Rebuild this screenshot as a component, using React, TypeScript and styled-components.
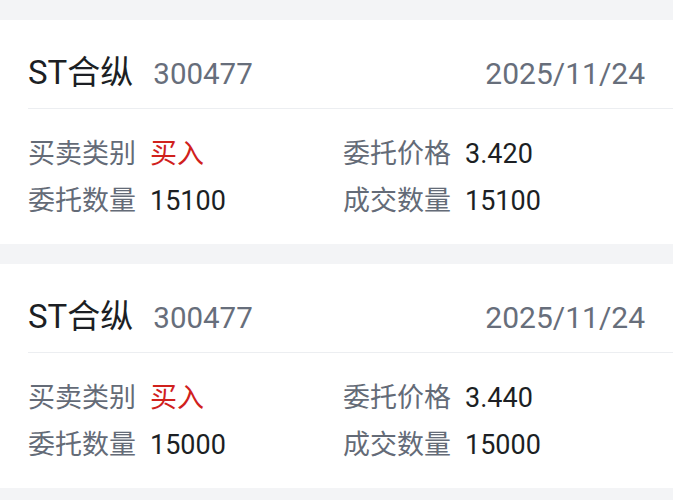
import React from "react";
import styled, { createGlobalStyle } from "styled-components";

const Global = createGlobalStyle`
  html, body { margin: 0; padding: 0; background: #f3f4f6; }
  body { font-family: Roboto, "Noto Sans CJK SC", sans-serif; }
`;

const Page = styled.div`
  background: #f3f4f6;
  padding-top: 20px;
  min-height: 500px;
  display: flex;
  flex-direction: column;
  gap: 20px;
`;

const Card = styled.div`
  background: #ffffff;
  padding-left: 28px;
`;

const Header = styled.div`
  display: flex;
  align-items: baseline;
  padding: 37px 28px 19px 0;
  height: 32px;
  line-height: 32px;
  border-bottom: 1px solid #eceef1;
`;

const Name = styled.span`
  font-size: 33px;
  color: #1c1f24;
`;

const Code = styled.span`
  font-size: 29.5px;
  color: #676e7b;
  margin-left: 20px;
`;

const DateText = styled.span`
  font-size: 30px;
  color: #676e7b;
  margin-left: auto;
`;

const Body = styled.div`
  display: grid;
  grid-template-columns: 315px 1fr;
  padding: 22px 0 19px;
`;

const Field = styled.div`
  display: flex;
  align-items: center;
  gap: 14px;
  line-height: 47px;
  font-size: 27px;
`;

const Label = styled.span`
  color: #646b77;
`;

const Value = styled.span<{ $red?: boolean }>`
  color: ${(p) => (p.$red ? "#d0211c" : "#1c1f24")};
`;

type Order = {
  name: string;
  code: string;
  date: string;
  side: string;
  price: string;
  qty: string;
  filled: string;
};

const orders: Order[] = [
  { name: "ST合纵", code: "300477", date: "2025/11/24", side: "买入", price: "3.420", qty: "15100", filled: "15100" },
  { name: "ST合纵", code: "300477", date: "2025/11/24", side: "买入", price: "3.440", qty: "15000", filled: "15000" },
];

export default function App() {
  return (
    <>
      <Global />
      <Page>
        {orders.map((o, i) => (
          <Card key={i}>
            <Header>
              <Name>{o.name}</Name>
              <Code>{o.code}</Code>
              <DateText>{o.date}</DateText>
            </Header>
            <Body>
              <Field>
                <Label>买卖类别</Label>
                <Value $red>{o.side}</Value>
              </Field>
              <Field>
                <Label>委托价格</Label>
                <Value>{o.price}</Value>
              </Field>
              <Field>
                <Label>委托数量</Label>
                <Value>{o.qty}</Value>
              </Field>
              <Field>
                <Label>成交数量</Label>
                <Value>{o.filled}</Value>
              </Field>
            </Body>
          </Card>
        ))}
      </Page>
    </>
  );
}
